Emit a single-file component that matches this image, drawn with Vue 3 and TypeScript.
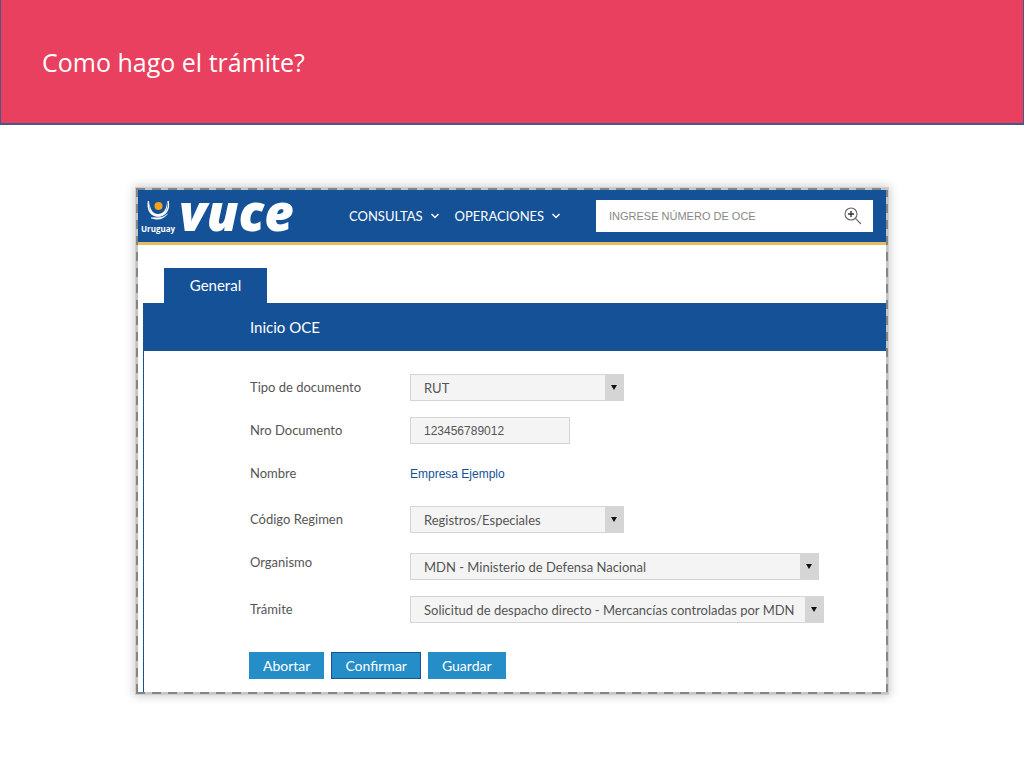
<script setup lang="ts">
import { ref } from 'vue'

interface Field {
  id: string
  label: string
  kind: 'select' | 'input' | 'text'
  value: string
  size: string
}

const menus: string[] = ['CONSULTAS', 'OPERACIONES']
const fields = ref<Field[]>([
  { id: 'tipo', label: 'Tipo de documento', kind: 'select', value: 'RUT', size: 'medium' },
  { id: 'nro', label: 'Nro Documento', kind: 'input', value: '123456789012', size: 'small' },
  { id: 'nombre', label: 'Nombre', kind: 'text', value: 'Empresa Ejemplo', size: 'plain' },
  { id: 'regimen', label: 'Código Regimen', kind: 'select', value: 'Registros/Especiales', size: 'medium' },
  { id: 'organismo', label: 'Organismo', kind: 'select', value: 'MDN - Ministerio de Defensa Nacional', size: 'large' },
  { id: 'tramite', label: 'Trámite', kind: 'select', value: 'Solicitud de despacho directo - Mercancías controladas por MDN', size: 'wide' },
])
const query = ref('')
</script>

<template>
  <div class="page">
    <header class="banner">
      <h1>Como hago el trámite?</h1>
    </header>

    <main class="frame">
      <div class="app">
        <div class="topbar">
          <svg class="logo" viewBox="0 0 154 52" role="img" aria-label="Uruguay VUCE">
            <path d="M10.500 11 C9 20 13 26 20 26 C27 26 32 20 30 11" fill="none" stroke="#fff" stroke-width="1.400" />
            <path d="M11.500 12 C12 20 15 24 20 24 C25 24 28.500 20 29 12 C30 21 26 27 20 26.500 C13 26 10.500 21 11.500 12Z" fill="#fff" />
            <path d="M13 28 Q23 32 29.500 24 Q24 29 16 27.500Z" fill="#fff" stroke="#fff" stroke-width=".5" />
            <circle cx="20.500" cy="16" r="4" fill="#f5a31c" />
            <text x="3" y="42" class="country">Uruguay</text>
            <text x="41" y="41" class="brand">vuce</text>
          </svg>
          <nav class="menus">
            <button v-for="m in menus" :key="m" type="button" class="menu">
              {{ m }}
              <svg viewBox="0 0 8 6" class="chevron" aria-hidden="true">
                <path d="M.5 1 4 4.500 7.500 1" fill="none" stroke="#fff" stroke-width="1.400" />
              </svg>
            </button>
          </nav>
          <form class="search" @submit.prevent>
            <input v-model="query" type="text" placeholder="INGRESE NÚMERO DE OCE" aria-label="Ingrese número de OCE" />
            <button type="submit" aria-label="Buscar">
              <svg viewBox="0 0 18 18" aria-hidden="true">
                <g fill="none" stroke="#666" stroke-width="1.100">
                  <circle cx="7" cy="7" r="6" />
                  <path d="M11.400 11.400 17 17" />
                  <path d="M4 7h6M7 4v6" stroke="#333" stroke-width="1.400" />
                </g>
              </svg>
            </button>
          </form>
        </div>

        <div class="content">
          <button type="button" class="tab">General</button>
          <section class="panel">
            <h2>Inicio OCE</h2>
            <form class="form" @submit.prevent>
              <div v-for="f in fields" :key="f.id" class="row" :class="'row-' + f.id">
                <label v-if="f.kind !== 'text'" :for="f.id">{{ f.label }}</label>
                <span v-else class="label">{{ f.label }}</span>
                <span v-if="f.kind === 'select'" class="picker" :class="f.size">
                  <select :id="f.id" v-model="f.value">
                    <option>{{ f.value }}</option>
                  </select>
                  <span class="arrow">
                    <svg viewBox="0 0 6 5" aria-hidden="true"><path d="M0 0H6L3 5Z" fill="#111" /></svg>
                  </span>
                </span>
                <input v-else-if="f.kind === 'input'" :id="f.id" v-model="f.value" type="text" :class="f.size" />
                <span v-else class="company">{{ f.value }}</span>
              </div>
              <div class="actions">
                <button type="button">Abortar</button>
                <button type="submit" class="active">Confirmar</button>
                <button type="button">Guardar</button>
              </div>
            </form>
          </section>
        </div>
      </div>
    </main>
  </div>
</template>

<style>
body {
  margin: 0;
  background: #fff;
}
</style>

<style scoped>
* {
  box-sizing: border-box;
}
.page {
  padding-bottom: 32px;
  font-family: Lato, "Liberation Sans", sans-serif;
  font-size: 13px;
  color: #555;
}
button,
select,
input {
  margin: 0;
  font-family: inherit;
  font-size: 13px;
  border-radius: 0;
}
.banner {
  display: flex;
  align-items: center;
  height: 125px;
  padding-left: 41px;
  background: #e8405e;
  border: 1px solid #465887;
  border-top: 0;
  border-bottom-width: 2px;
}
h1 {
  margin: 0;
  font-family: "Trebuchet MS", "Open Sans", sans-serif;
  font-size: 25px;
  font-weight: 400;
  line-height: 32px;
  color: #fff;
}
.frame {
  margin: 63px 136px 0;
  padding: 2px;
  background:
    repeating-linear-gradient(90deg, #858585 0 9px, #c4c4c4 9px 16px) top / 100% 2px no-repeat,
    repeating-linear-gradient(90deg, #858585 0 9px, #c4c4c4 9px 16px) bottom / 100% 2px no-repeat,
    repeating-linear-gradient(#858585 0 9px, #c4c4c4 9px 16px) left / 2px 100% no-repeat,
    repeating-linear-gradient(#858585 0 9px, #c4c4c4 9px 16px) right / 2px 100% no-repeat;
  box-shadow: 0 0 0 1px #d0d0d0, 0 0 9px 2px #ccc;
}
.app {
  background: #fff;
}
.topbar {
  display: flex;
  align-items: center;
  height: 55px;
  padding-right: 13px;
  background: #155196;
  border-bottom: 3px solid #e3bd62;
}
.logo {
  width: 154px;
  height: 52px;
  flex: none;
  overflow: visible;
}
.country {
  font: 700 8px "Open Sans", sans-serif;
  fill: #fff;
}
.brand {
  font: italic 800 51px/1 "Open Sans", sans-serif;
  fill: #fff;
}
.menus {
  display: flex;
  gap: 16px;
  margin-left: 57px;
}
.menu {
  display: flex;
  align-items: center;
  gap: 8px;
  padding: 0 0 1px;
  background: none;
  border: 0;
  color: #fff;
  white-space: nowrap;
}
.chevron {
  width: 8px;
  height: 6px;
}
.search {
  display: flex;
  align-items: center;
  width: 277px;
  height: 32px;
  margin-left: auto;
  background: #fff;
}
.search input {
  flex: 1;
  min-width: 0;
  padding: 0 0 0 13px;
  border: 0;
  background: none;
  font-family: "Liberation Sans", sans-serif;
  font-size: 11px;
}
.search input::placeholder {
  color: #888;
  opacity: 1;
}
.search button {
  width: 18px;
  height: 18px;
  margin-right: 11px;
  padding: 0;
  border: 0;
  background: none;
}
.search svg {
  display: block;
  width: 18px;
  height: 18px;
}
.content {
  padding: 23px 0 0 5px;
}
.tab {
  display: block;
  width: 103px;
  height: 35px;
  margin-left: 21px;
  padding: 0 0 1px;
  border: 0;
  background: #155196;
  color: #fff;
  font-size: 15px;
}
.panel {
  border-left: 1px solid #155196;
}
h2 {
  margin: 0;
  padding-left: 106px;
  background: #155196;
  color: #fff;
  font-size: 15px;
  font-weight: 400;
  line-height: 48px;
}
.form {
  padding: 23px 0 13px 106px;
}
.row {
  display: flex;
  height: 27px;
  margin-bottom: 16px;
}
.row-nombre {
  margin-bottom: 19px;
}
.row-regimen {
  margin-bottom: 20px;
}
.row label,
.label {
  width: 160px;
  flex: none;
  line-height: 26px;
}
.row-organismo label {
  line-height: 18px;
}
.company {
  color: #155196;
  font-family: "Liberation Sans", sans-serif;
  font-size: 12px;
  line-height: 28px;
}
.picker {
  display: flex;
  border: 1px solid #d5d5d5;
  background: #f4f4f4;
}
.picker select {
  flex: 1;
  min-width: 0;
  padding: 0 0 0 13px;
  appearance: none;
  border: 0;
  background: none;
  color: #555;
}
.arrow {
  display: flex;
  align-items: center;
  justify-content: center;
  width: 18px;
  background: #d5d5d5;
  pointer-events: none;
}
.arrow svg {
  width: 6px;
  height: 5px;
}
.medium {
  width: 214px;
}
.large {
  width: 409px;
}
.wide {
  width: 414px;
}
.small {
  width: 160px;
  padding: 0 13px;
  border: 1px solid #d5d5d5;
  background: #f4f4f4;
  color: #555;
  font-family: "Liberation Sans", sans-serif;
  font-size: 12px;
}
.actions {
  display: flex;
  gap: 7px;
  margin: 29px 0 0 -1px;
}
.actions button {
  height: 27px;
  padding: 0 13px;
  border: 1px solid #258dc8;
  background: #258dc8;
  color: #fff;
  font-size: 14px;
}
.actions .active {
  border-color: #155196;
}
</style>
